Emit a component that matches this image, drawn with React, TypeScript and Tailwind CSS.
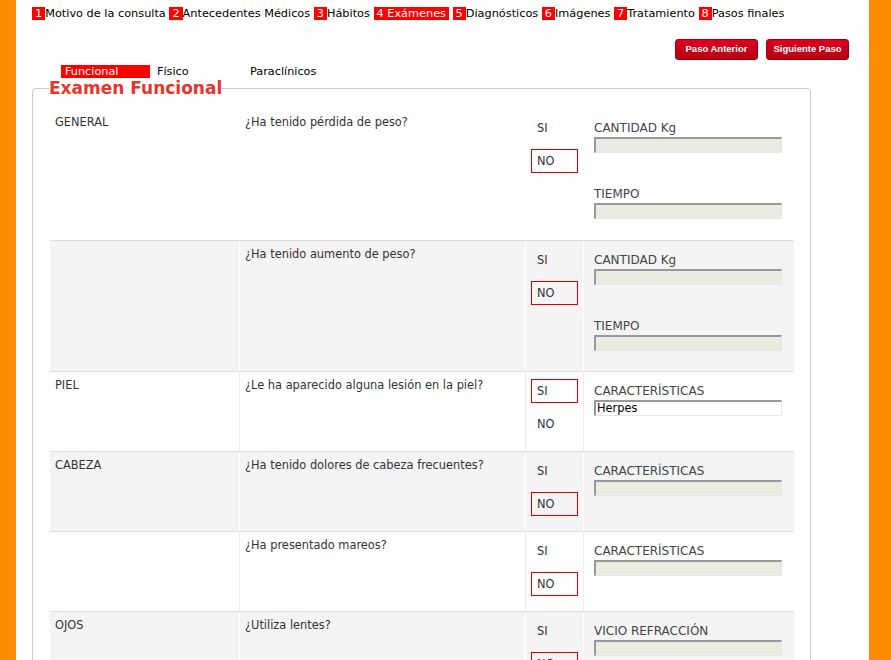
import React from "react";

const steps = [
  "Motivo de la consulta",
  "Antecedentes Médicos",
  "Hábitos",
  "Exámenes",
  "Diagnósticos",
  "Imágenes",
  "Tratamiento",
  "Pasos finales",
];

type Field = { label: string; value?: string };
type Row = {
  group: string;
  question: string;
  answer: "SI" | "NO";
  fields: Field[];
  h: string;
};

const rows: Row[] = [
  {
    group: "GENERAL",
    question: "¿Ha tenido pérdida de peso?",
    answer: "NO",
    fields: [{ label: "CANTIDAD Kg" }, { label: "TIEMPO" }],
    h: "h-[132px]",
  },
  {
    group: "",
    question: "¿Ha tenido aumento de peso?",
    answer: "NO",
    fields: [{ label: "CANTIDAD Kg" }, { label: "TIEMPO" }],
    h: "h-[131px]",
  },
  {
    group: "PIEL",
    question: "¿Le ha aparecido alguna lesión en la piel?",
    answer: "SI",
    fields: [{ label: "CARACTERÍSTICAS", value: "Herpes" }],
    h: "h-[80px]",
  },
  {
    group: "CABEZA",
    question: "¿Ha tenido dolores de cabeza frecuentes?",
    answer: "NO",
    fields: [{ label: "CARACTERÍSTICAS" }],
    h: "h-[80px]",
  },
  {
    group: "",
    question: "¿Ha presentado mareos?",
    answer: "NO",
    fields: [{ label: "CARACTERÍSTICAS" }],
    h: "h-[80px]",
  },
  {
    group: "OJOS",
    question: "¿Utiliza lentes?",
    answer: "NO",
    fields: [{ label: "VICIO REFRACCIÓN" }],
    h: "h-[80px]",
  },
];

function Choice({ text, active }: { text: string; active: boolean }) {
  return (
    <div
      className={`h-[24px] w-[47px] border pl-[5px] leading-[22px] ${
        active ? "border-[#e00000]" : "border-transparent"
      }`}
    >
      {text}
    </div>
  );
}

function TextBox({ value }: { value?: string }) {
  return (
    <div
      className={`mt-[2px] h-[16px] w-[188px] border-t-2 border-l-2 border-r border-b border-t-[#999] border-l-[#999] border-r-[#e6e6e6] border-b-[#e6e6e6] pl-[1px] text-[11.4px] leading-[13px] text-black ${
        value ? "bg-white" : "bg-[#ebebe4]"
      }`}
    >
      {value}
    </div>
  );
}

export default function App() {
  return (
    <div className="h-[660px] overflow-hidden bg-[#ff8c00] font-['DejaVu_Sans',sans-serif]">
      <div className="ml-[16px] h-[660px] w-[853px] bg-white pl-[16px]">
        {/* Steps */}
        <div className="pt-[7px] text-[11.3px] leading-[14px] text-black">
          {steps.map((s, i) =>
            i === 3 ? (
              <span key={s}>
                <span className="bg-[#ff0000] px-[3px] text-white">
                  {i + 1} {s}
                </span>{" "}
              </span>
            ) : (
              <span key={s}>
                <span className="bg-[#ff0000] px-[3px] text-white">{i + 1}</span>
                {s}{" "}
              </span>
            )
          )}
        </div>

        {/* Buttons */}
        <div className="mt-[18px] flex justify-end gap-[8px] pr-[20px]">
          {["Paso Anterior", "Siguiente Paso"].map((b) => (
            <button
              key={b}
              className="h-[21px] w-[83px] rounded-[3px] border border-[#a3000c] bg-gradient-to-b from-[#dc0020] to-[#b8000f] font-['Liberation_Sans',Arial,sans-serif] text-[9.5px] font-bold text-white"
            >
              {b}
            </button>
          ))}
        </div>

        {/* Tabs */}
        <div className="mt-[5px] flex pl-[29px] text-[11.25px] leading-[13px] text-black">
          <div className="mr-[4px] w-[89px] bg-[#ff0000] pl-[4px] text-white">Funcional</div>
          <div className="mr-[4px] w-[89px] pl-[3px]">Físico</div>
          <div className="w-[89px] pl-[3px]">Paraclínicos</div>
        </div>

        {/* Fieldset */}
        <fieldset className="w-[779px] rounded-[4px] border border-[#cccccc] pl-[17px] pr-[16px]">
          <legend className="ml-[-1px] text-[17px] font-bold leading-[20px] text-[#e8352a]">
            Examen Funcional
          </legend>
          <div className="mt-[10px] text-[11.4px] leading-[13px] text-[#333]">
            {rows.map((r, i) => {
              const gray = i % 2 === 1;
              const sep = i === 0 ? "border-transparent" : gray ? "border-white" : "border-[#ececec]";
              return (
                <div
                  key={i}
                  className={`grid grid-cols-[189px_286px_58px_210px] border-t ${
                    i === 0 ? "border-t-transparent" : "border-t-[#dddddd]"
                  } ${gray ? "bg-[#f4f4f4]" : "bg-white"} ${r.h}`}
                >
                  <div className="pl-[5px] pt-[7px]">{r.group}</div>
                  <div className={`border-l pl-[5px] pt-[7px] ${sep}`}>{r.question}</div>
                  <div className={`flex flex-col gap-[9px] border-l pl-[5px] pt-[7px] ${sep}`}>
                    <Choice text="SI" active={r.answer === "SI"} />
                    <Choice text="NO" active={r.answer === "NO"} />
                  </div>
                  <div className={`flex flex-col gap-[34px] border-l pl-[10px] pt-[12px] ${sep}`}>
                    {r.fields.map((f) => (
                      <div key={f.label}>
                        <div className="text-[12px] leading-[14px] text-[#444]">{f.label}</div>
                        <TextBox value={f.value} />
                      </div>
                    ))}
                  </div>
                </div>
              );
            })}
          </div>
        </fieldset>
      </div>
    </div>
  );
}
